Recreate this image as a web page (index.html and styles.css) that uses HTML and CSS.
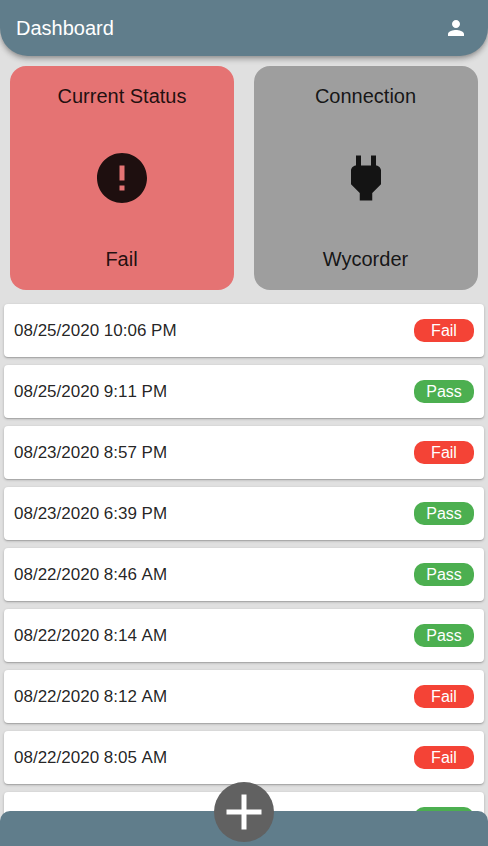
FILE: index.html
```html
<!DOCTYPE html>
<html lang="en">
<head>
<meta charset="utf-8">
<title>Dashboard</title>
<link rel="stylesheet" href="styles.css">
</head>
<body>
<div class="app">
  <header class="app-bar">
    <h1 class="title">Dashboard</h1>
    <svg class="account" viewBox="0 0 24 24"><path d="M12 12c2.21 0 4-1.79 4-4s-1.79-4-4-4-4 1.79-4 4 1.790 4 4 4zm0 2c-2.67 0-8 1.340-8 4v2h16v-2c0-2.660-5.330-4-8-4z"/></svg>
  </header>
  <main class="content">
    <section class="tiles">
      <div class="tile tile-fail">
        <span class="tile-text tile-heading">Current Status</span>
        <svg class="tile-icon" viewBox="0 0 24 24"><path d="M12 2C6.480 2 2 6.480 2 12s4.480 10 10 10 10-4.480 10-10S17.520 2 12 2zm1 15h-2v-2h2v2zm0-4h-2V7h2v6z"/></svg>
        <span class="tile-text">Fail</span>
      </div>
      <div class="tile tile-connection">
        <span class="tile-text">Connection</span>
        <svg class="tile-icon" viewBox="0 0 24 24"><path d="M16.010 7L16 3h-2v4h-4V3H8v4h-.010C7 6.990 6 7.990 6 8.990v5.490L9.500 18v3h5v-3l3.500-3.510v-5.500c0-1-1-2-1.990-1.990z"/></svg>
        <span class="tile-text">Wycorder</span>
      </div>
    </section>
    <ul class="records">
      <li class="record"><span>08/25/2020 10:06 PM</span><span class="chip fail">Fail</span></li>
      <li class="record"><span>08/25/2020 9:11 PM</span><span class="chip pass">Pass</span></li>
      <li class="record"><span>08/23/2020 8:57 PM</span><span class="chip fail">Fail</span></li>
      <li class="record"><span>08/23/2020 6:39 PM</span><span class="chip pass">Pass</span></li>
      <li class="record"><span>08/22/2020 8:46 AM</span><span class="chip pass">Pass</span></li>
      <li class="record"><span>08/22/2020 8:14 AM</span><span class="chip pass">Pass</span></li>
      <li class="record"><span>08/22/2020 8:12 AM</span><span class="chip fail">Fail</span></li>
      <li class="record"><span>08/22/2020 8:05 AM</span><span class="chip fail">Fail</span></li>
      <li class="record"><span></span><span class="chip pass"></span></li>
    </ul>
  </main>
  <footer class="bottom-bar">
    <button class="add" aria-label="Add"><svg viewBox="0 0 24 24"><path d="M19 13h-6v6h-2v-6H5v-2h6V5h2v6h6v2z"/></svg></button>
  </footer>
</div>
</body>
</html>
```

FILE: styles.css
```css
* { box-sizing: border-box; }
body { margin: 0; font-family: "Liberation Sans", Arial, sans-serif; color: rgba(0, 0, 0, .87); }
.app { display: flex; flex-direction: column; height: 846px; overflow: hidden; background: #e0e0e0; }
.app-bar {
  flex: none; height: 56px; padding: 0 20px 0 16px; display: flex; align-items: center; justify-content: space-between;
  background: #607d8b; color: #fff; border-radius: 0 0 28px 28px; position: relative; z-index: 1;
  box-shadow: 0 2px 4px -1px rgba(0,0,0,.2), 0 4px 5px rgba(0,0,0,.14), 0 1px 10px rgba(0,0,0,.12);
}
.title { margin: 0; font-size: 20px; font-weight: 400; }
.account { width: 24px; height: 24px; fill: #fff; }
.content { flex: 1; min-height: 0; margin-bottom: -10px; overflow: hidden; }
.tiles { display: grid; grid-template-columns: 1fr 1fr; gap: 20px; padding: 10px; }
.tile {
  height: 224px; padding: 18px 0 19px; border-radius: 16px; display: flex; flex-direction: column;
  align-items: center; justify-content: space-between; font-size: 20px; line-height: 24px;
}
.tile-fail { background: #e57373; }
.tile-connection { background: #9e9e9e; }
.tile-text { width: 100%; padding-right: 1px; text-align: center; }
.tile-heading { padding-right: 0; }
.tile-icon { width: 60px; height: 60px; margin-top: 1px; fill: rgba(0, 0, 0, .87); }
.records { list-style: none; margin: 0; padding: 4px; display: flex; flex-direction: column; gap: 8px; }
.record {
  height: 53px; padding: 0 10px; display: flex; align-items: center; justify-content: space-between;
  background: #fff; border-radius: 4px; font-size: 17px; font-kerning: none;
  box-shadow: 0 1px 3px rgba(0,0,0,.2), 0 1px 1px rgba(0,0,0,.14);
}
.chip { width: 60px; height: 23px; border-radius: 10px; color: #fff; font-size: 16px; line-height: 23px; text-align: center; }
.fail { background: #f44336; }
.pass { background: #4caf50; }
.bottom-bar { flex: none; height: 35px; background: #607d8b; border-radius: 10px 10px 0 0; position: relative; }
.add {
  position: absolute; left: 50%; top: -29px; transform: translateX(-50%); width: 60px; height: 60px; padding: 0;
  border: 0; border-radius: 50%; background: #616161; color: #fff;
}
.add svg { display: block; width: 60px; height: 60px; fill: #fff; }
```
